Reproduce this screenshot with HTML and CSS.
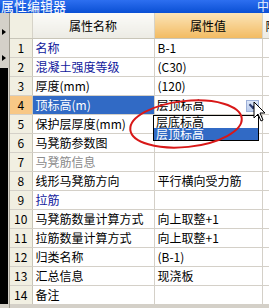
FILE: index.html
```html
<!DOCTYPE html>
<html lang="zh">
<head>
  <meta charset="UTF-8" />
  <title>属性编辑器</title>
  <link rel="stylesheet" href="styles.css">
</head>
<body>
  <div class="titlebar">
    <span class="title">属性编辑器</span>
    <span class="title-next">中</span>
  </div>

  <div class="main">
    <div class="side">
      <div class="side-top">
        <span class="arrow"></span>
        <span class="arrow"></span>
      </div>
      <div class="side-dark"></div>
    </div>

    <div class="grid-wrap">
      <table class="grid">
        <colgroup>
          <col class="c-num">
          <col class="c-name">
          <col class="c-val">
          <col class="c-extra">
        </colgroup>
        <thead>
          <tr>
            <th class="num"></th>
            <th>属性名称</th>
            <th class="sorted">属性值</th>
            <th class="extra">附加</th>
          </tr>
        </thead>
        <tbody>
          <tr><td class="num">1</td><td class="blue">名称</td><td>B-1</td><td></td></tr>
          <tr><td class="num">2</td><td class="blue">混凝土强度等级</td><td>(C30)</td><td></td></tr>
          <tr><td class="num">3</td><td>厚度(mm)</td><td>(120)</td><td></td></tr>
          <tr class="current">
            <td class="num">4</td>
            <td class="selected">顶标高(m)</td>
            <td class="editor">层顶标高<span class="drop-btn"></span></td>
            <td></td>
          </tr>
          <tr><td class="num">5</td><td>保护层厚度(mm)</td><td></td><td></td></tr>
          <tr><td class="num">6</td><td>马凳筋参数图</td><td></td><td></td></tr>
          <tr><td class="num">7</td><td class="gray">马凳筋信息</td><td></td><td></td></tr>
          <tr><td class="num">8</td><td>线形马凳筋方向</td><td>平行横向受力筋</td><td></td></tr>
          <tr><td class="num">9</td><td class="blue">拉筋</td><td></td><td></td></tr>
          <tr><td class="num">10</td><td>马凳筋数量计算方式</td><td>向上取整+1</td><td></td></tr>
          <tr><td class="num">11</td><td>拉筋数量计算方式</td><td>向上取整+1</td><td></td></tr>
          <tr><td class="num">12</td><td>归类名称</td><td>(B-1)</td><td></td></tr>
          <tr><td class="num">13</td><td>汇总信息</td><td>现浇板</td><td></td></tr>
          <tr><td class="num">14</td><td>备注</td><td></td><td></td></tr>
        </tbody>
      </table>

      <ul class="droplist">
        <li>层底标高</li>
        <li class="active">层顶标高</li>
      </ul>
    </div>
  </div>

  <svg class="marks" width="269" height="308" viewBox="0 0 269 308">
    <ellipse cx="186" cy="124" rx="56" ry="23" transform="rotate(-6 186 124)"
             fill="none" stroke="#d81818" stroke-width="2" />
    <path d="M254 102 L254 118 L258 114 L261 121 L263 120 L260 113 L265 113 Z"
          fill="#fff" stroke="#000" stroke-width="1" />
  </svg>
</body>
</html>
```

FILE: styles.css
```css
* {
  box-sizing: border-box;
}
body {
  margin: 0;
  width: 269px;
  height: 308px;
  overflow: hidden;
  background-color: #d4d0c8;
  font-family: "Noto Sans CJK SC", "DejaVu Sans", sans-serif;
  font-size: 12px;
  color: #000;
  position: relative;
}
.titlebar {
  height: 13px;
  background: linear-gradient(#2d6ff0, #0a4fd4);
  color: #fff;
  display: flex;
  justify-content: space-between;
  overflow: hidden;
}
.title {
  font-size: 13px;
  line-height: 11px;
  padding-left: 1px;
}
.title-next {
  font-size: 12px;
  line-height: 11px;
  color: #e8eefc;
}
.main {
  display: flex;
  height: 295px;
}
.side {
  width: 10px;
  display: flex;
  flex-direction: column;
  border-right: 1px solid #a09c90;
}
.side-top {
  height: 55px;
  display: flex;
  flex-direction: column;
  gap: 20px;
  padding: 16px 0 0 2px;
}
.arrow {
  width: 0;
  height: 0;
  border-top: 3px solid transparent;
  border-bottom: 3px solid transparent;
  border-left: 4px solid #000;
}
.side-dark {
  flex: 1;
  background-color: #000;
  margin: 0 1px 4px 0;
}
.grid-wrap {
  position: relative;
  flex: 1;
  overflow: hidden;
}
.grid {
  border-collapse: collapse;
  table-layout: fixed;
  width: 300px;
  background-color: #fff;
}
.c-num { width: 22px; }
.c-name { width: 122px; }
.c-val { width: 108px; }
.c-extra { width: 48px; }
.grid th {
  height: 25px;
  font-weight: normal;
  background: linear-gradient(#fbfbf8, #ecebe4);
  border-right: 1px solid #d6d3c8;
  border-bottom: 1px solid #c8c5b8;
  padding: 0;
}
.grid th.num {
  background: #f1efe2;
}
.grid th.sorted {
  background: linear-gradient(#fbe4b8, #f2bb62);
}
.grid th.extra {
  text-align: left;
  padding-left: 3px;
}
.grid td {
  height: 19px;
  padding: 0 0 0 3px;
  line-height: 18px;
  white-space: nowrap;
  overflow: hidden;
  border-right: 1px solid #d4d0c8;
  border-bottom: 1px solid #d4d0c8;
}
.grid td.num {
  padding: 0;
  text-align: center;
  background-color: #f1efe2;
  border-right-color: #c8c5b8;
}
.current td.num {
  background-color: #f8c886;
}
.blue {
  color: #10189c;
}
.gray {
  color: #8a8a8a;
}
.grid td.selected {
  background-color: #316ac5;
  color: #fff;
}
.grid td.editor {
  position: relative;
  padding-left: 2px;
}
.drop-btn {
  position: absolute;
  right: 3px;
  top: 4px;
  width: 13px;
  height: 12px;
  background: linear-gradient(#dde7f8, #b9cbec);
  border: 1px solid #9db0d8;
}
.drop-btn::after {
  content: "";
  position: absolute;
  left: 3px;
  top: 1px;
  width: 4px;
  height: 4px;
  border-right: 2px solid #2a3a70;
  border-bottom: 2px solid #2a3a70;
  transform: rotate(45deg);
}
.droplist {
  position: absolute;
  left: 143px;
  top: 102px;
  width: 106px;
  margin: 0;
  padding: 0;
  list-style: none;
  background-color: #fff;
  border: 1px solid #000;
}
.droplist li {
  height: 12px;
  line-height: 12px;
  font-size: 12px;
  padding-left: 2px;
}
.droplist li.active {
  background-color: #316ac5;
  color: #fff;
}
.marks {
  position: absolute;
  top: 0;
  left: 0;
  pointer-events: none;
}
```
